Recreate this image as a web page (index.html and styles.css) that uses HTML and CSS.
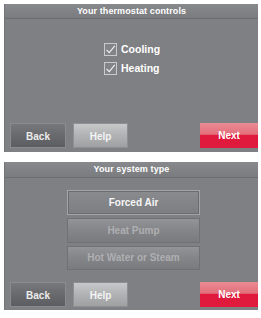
FILE: index.html
```html
<!DOCTYPE html>
<html>
<head>
<meta charset="utf-8">
<link rel="stylesheet" href="styles.css">
</head>
<body>
<div class="screen screen-controls">
  <div class="title">Your thermostat controls</div>
  <div class="checks">
    <div class="check">
      <span class="box"><svg width="13" height="13" viewBox="0 0 13 13"><path d="M2.5 6.8 L5.2 9.6 L10.8 2.8" fill="none" stroke="#f2f2f2" stroke-width="1.1"/></svg></span>
      <span class="label">Cooling</span>
    </div>
    <div class="check">
      <span class="box"><svg width="13" height="13" viewBox="0 0 13 13"><path d="M2.5 6.8 L5.2 9.6 L10.8 2.8" fill="none" stroke="#f2f2f2" stroke-width="1.1"/></svg></span>
      <span class="label">Heating</span>
    </div>
  </div>
  <div class="footer">
    <div class="btn back">Back</div>
    <div class="btn help">Help</div>
    <div class="btn next">Next</div>
  </div>
</div>
<div class="screen screen-system">
  <div class="title">Your system type</div>
  <div class="choices">
    <div class="choice selected">Forced Air</div>
    <div class="choice disabled">Heat Pump</div>
    <div class="choice disabled">Hot Water or Steam</div>
  </div>
  <div class="footer">
    <div class="btn back">Back</div>
    <div class="btn help">Help</div>
    <div class="btn next">Next</div>
  </div>
</div>
</body>
</html>
```
FILE: styles.css
```css
html, body {
  margin: 0;
  padding: 0;
  background: #ffffff;
}
body {
  padding: 4px 3px 0 4px;
  font-family: "Liberation Sans", Arial, sans-serif;
  font-weight: bold;
  color: #ffffff;
}
.screen {
  width: 254px;
  height: 148px;
  box-sizing: border-box;
  background: #7f8083;
  border-left: 1px solid #747578;
  display: flex;
  flex-direction: column;
}
.screen-system {
  margin-top: 10px;
}
.title {
  height: 15px;
  box-sizing: border-box;
  background: linear-gradient(#88898c, #808184 60%, #7b7c7f);
  border-bottom: 1px solid #6c6d70;
  font-size: 9px;
  line-height: 14px;
  text-align: center;
  letter-spacing: 0.1px;
}
.screen-system .title {
  height: 16px;
  line-height: 15px;
}
.checks {
  margin-top: 24px;
  display: flex;
  flex-direction: column;
  gap: 6px;
  padding-left: 99px;
}
.check {
  display: flex;
  align-items: center;
  gap: 4px;
  height: 13px;
}
.box {
  width: 13px;
  height: 13px;
  box-sizing: border-box;
  border: 1px solid #c9cacc;
  background: #838487;
  display: flex;
}
.box svg {
  margin: -1px;
}
.label {
  font-size: 10.5px;
  line-height: 13px;
}
.footer {
  margin-top: auto;
  padding: 0 0 4px 5px;
  display: flex;
  gap: 7px;
}
.screen-system .footer {
  padding-bottom: 3px;
}
.btn {
  height: 25px;
  box-sizing: border-box;
  font-size: 10px;
  line-height: 25px;
  text-align: center;
}
.back {
  width: 56px;
  background: linear-gradient(#77787b, #6a6b6e 45%, #5c5d60);
  border: 1px solid #8a8b8e;
  color: #ececec;
}
.help {
  width: 55px;
  background: linear-gradient(#c7c8ca, #b3b4b6 45%, #9fa0a2);
  border: 1px solid #8e8f92;
  color: #f4f4f4;
}
.next {
  width: 58px;
  margin-left: auto;
  background: linear-gradient(#ea8b93, #e26f7b 45%, #e0193d 50%, #df1a3c);
  color: #ffffff;
}
.choices {
  margin-top: 12px;
  display: flex;
  flex-direction: column;
  gap: 3px;
  padding-left: 62px;
}
.choice {
  width: 133px;
  height: 25px;
  box-sizing: border-box;
  font-size: 10px;
  line-height: 23px;
  text-align: center;
}
.choices .choice:last-child {
  height: 24px;
  line-height: 22px;
}
.selected {
  border: 1px solid #a3a4a6;
  box-shadow: inset 0 0 0 1px #6b6c6f;
  background: linear-gradient(#8a8b8e, #7d7e81);
  color: #f6f6f6;
}
.disabled {
  border: 1px solid #707174;
  background: linear-gradient(#939497, #85868a 45%, #7a7b7e);
  color: #aeafb1;
}
```
